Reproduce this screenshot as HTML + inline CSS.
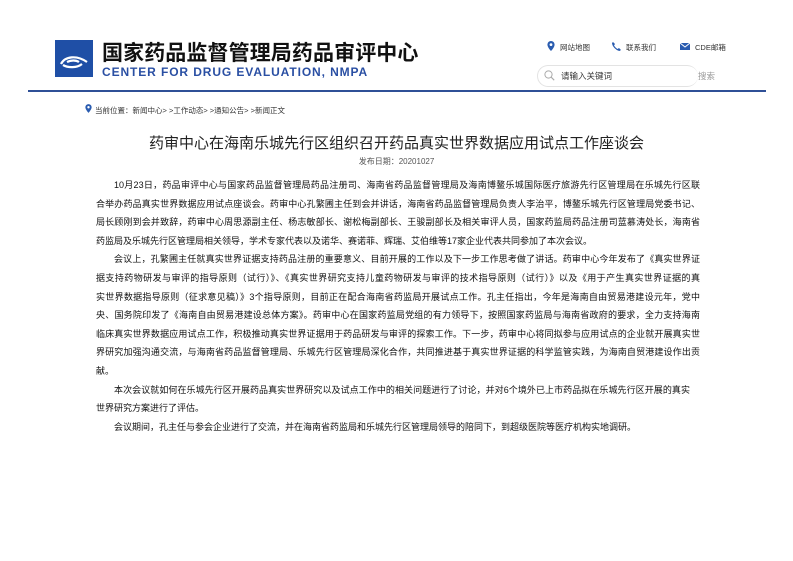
<!DOCTYPE html>
<html><head><meta charset="utf-8">
<style>
body{margin:0;background:#fff;width:793px;height:561px;overflow:hidden;font-family:"Liberation Sans","Noto Sans CJK SC",sans-serif;color:#222;position:relative}
.abs{position:absolute;white-space:nowrap}
.logo{left:55px;top:40px;width:38px;height:37px;background:#1f4fa6}
.cn{left:102px;top:37px;font-size:21px;font-weight:bold;color:#111;letter-spacing:0.1px}
.en{left:102px;top:65px;font-size:12px;font-weight:bold;color:#2a4fa3;letter-spacing:0.9px}
.line{left:28px;top:90px;width:738px;height:2px;background:#2f5097}
.nav{font-size:7.5px;color:#333;top:42px}
.search{left:537px;top:65px;width:160px;height:20px;border:1px solid #e3e3e3;border-radius:11px;border-right:none}
.body{left:96px;width:604px;font-size:9px;line-height:18.6px;color:#111}
.l{display:block;text-align:justify;text-align-last:justify;white-space:nowrap;height:18.6px}
.e{text-align-last:left}
.i{text-indent:18px}
</style></head><body>
<div class="abs logo">
<svg width="38" height="37" viewBox="0 0 38 37"><g fill="none" stroke="#fff" stroke-width="2.2"><path d="M6 24c4-8 16-9 26-2"/><path d="M8 25c5 3 14 3 19-1"/><path d="M12 22c4-2 9-2 12 0"/></g></svg>
</div>
<div class="abs cn">国家药品监督管理局药品审评中心</div>
<div class="abs en">CENTER FOR DRUG EVALUATION, NMPA</div>

<svg class="abs" style="left:547px;top:41px" width="8" height="10" viewBox="0 0 8 10"><path d="M4 0a3.6 3.6 0 0 0-3.6 3.6C.4 6.3 4 10 4 10s3.6-3.7 3.6-6.4A3.6 3.6 0 0 0 4 0zm0 5a1.4 1.4 0 1 1 0-2.8A1.4 1.4 0 0 1 4 5z" fill="#2a5cb0"/></svg>
<div class="abs nav" style="left:560px">网站地图</div>
<svg class="abs" style="left:611px;top:41px" width="10" height="10" viewBox="0 0 10 10"><path d="M2 1l2 2-1 1.5c1 1.5 2 2.5 3.5 3.5L8 7l2 2-1.5 1C5 9.5 1 5 1 2z" fill="#2a5cb0"/></svg>
<div class="abs nav" style="left:626px">联系我们</div>
<svg class="abs" style="left:680px;top:43px" width="10" height="7" viewBox="0 0 10 7"><rect width="10" height="7" fill="#2a5cb0"/><path d="M0 0l5 4 5-4" stroke="#fff" stroke-width="1" fill="none"/></svg>
<div class="abs nav" style="left:695px">CDE邮箱</div>

<div class="abs search"></div>
<svg class="abs" style="left:544px;top:70px" width="11" height="11" viewBox="0 0 11 11"><circle cx="4.5" cy="4.5" r="3.6" fill="none" stroke="#aaa" stroke-width="1"/><path d="M7.2 7.2l3 3" stroke="#aaa" stroke-width="1.1"/></svg>
<div class="abs" style="left:561px;top:70px;font-size:8.5px;color:#333">请输入关键词</div>
<div class="abs" style="left:698px;top:70px;font-size:8.5px;color:#999">搜索</div>

<div class="abs line"></div>

<svg class="abs" style="left:85px;top:104px" width="7" height="9" viewBox="0 0 8 10"><path d="M4 0a3.6 3.6 0 0 0-3.6 3.6C.4 6.3 4 10 4 10s3.6-3.7 3.6-6.4A3.6 3.6 0 0 0 4 0zm0 5a1.4 1.4 0 1 1 0-2.8A1.4 1.4 0 0 1 4 5z" fill="#2a5cb0"/></svg>
<div class="abs" style="left:95px;top:105px;font-size:7.5px;color:#333">当前位置：新闻中心&gt; &gt;工作动态&gt; &gt;通知公告&gt; &gt;新闻正文</div>

<div class="abs" style="left:0;width:793px;text-align:center;top:132px;font-size:15px;color:#222">药审中心在海南乐城先行区组织召开药品真实世界数据应用试点工作座谈会</div>
<div class="abs" style="left:0;width:793px;text-align:center;top:156px;font-size:8px;color:#555">发布日期：20201027</div>

<div class="abs body" style="top:176px">
<span class="l i">10月23日，药品审评中心与国家药品监督管理局药品注册司、海南省药品监督管理局及海南博鳌乐城国际医疗旅游先行区管理局在乐城先行区联</span>
<span class="l">合举办药品真实世界数据应用试点座谈会。药审中心孔繁圃主任到会并讲话，海南省药品监督管理局负责人李治平，博鳌乐城先行区管理局党委书记、</span>
<span class="l">局长顾刚到会并致辞，药审中心周思源副主任、杨志敏部长、谢松梅副部长、王骏副部长及相关审评人员，国家药监局药品注册司蓝慕涛处长，海南省</span>
<span class="l e">药监局及乐城先行区管理局相关领导，学术专家代表以及诺华、赛诺菲、辉瑞、艾伯维等17家企业代表共同参加了本次会议。</span>
<span class="l i">会议上，孔繁圃主任就真实世界证据支持药品注册的重要意义、目前开展的工作以及下一步工作思考做了讲话。药审中心今年发布了《真实世界证</span>
<span class="l">据支持药物研发与审评的指导原则（试行）》、《真实世界研究支持儿童药物研发与审评的技术指导原则（试行）》以及《用于产生真实世界证据的真</span>
<span class="l">实世界数据指导原则（征求意见稿）》3个指导原则，目前正在配合海南省药监局开展试点工作。孔主任指出，今年是海南自由贸易港建设元年，党中</span>
<span class="l">央、国务院印发了《海南自由贸易港建设总体方案》。药审中心在国家药监局党组的有力领导下，按照国家药监局与海南省政府的要求，全力支持海南</span>
<span class="l">临床真实世界数据应用试点工作，积极推动真实世界证据用于药品研发与审评的探索工作。下一步，药审中心将同拟参与应用试点的企业就开展真实世</span>
<span class="l">界研究加强沟通交流，与海南省药品监督管理局、乐城先行区管理局深化合作，共同推进基于真实世界证据的科学监管实践，为海南自贸港建设作出贡</span>
<span class="l e">献。</span>
<span class="l i" style="width:594px">本次会议就如何在乐城先行区开展药品真实世界研究以及试点工作中的相关问题进行了讨论，并对6个境外已上市药品拟在乐城先行区开展的真实</span>
<span class="l e">世界研究方案进行了评估。</span>
<span class="l i e">会议期间，孔主任与参会企业进行了交流，并在海南省药监局和乐城先行区管理局领导的陪同下，到超级医院等医疗机构实地调研。</span>
</div>
</body></html>
